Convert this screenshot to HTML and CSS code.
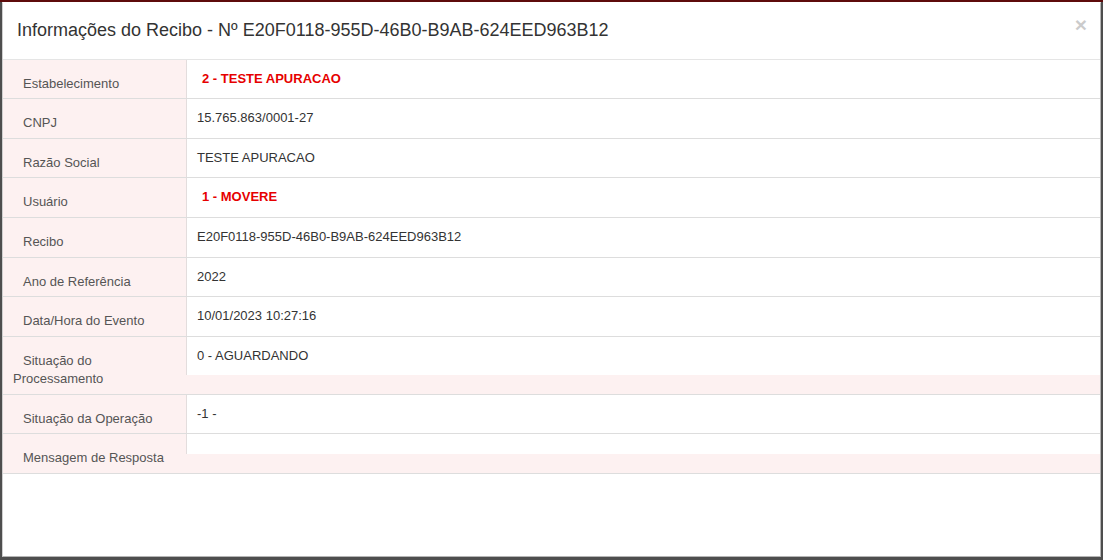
FILE: index.html
```html
<!DOCTYPE html>
<html lang="pt-BR">
<head>
<meta charset="utf-8">
<title>Informações do Recibo</title>
<link rel="stylesheet" href="styles.css">
</head>
<body>
<div class="modal">
  <div class="modal-header">
    <button class="close" type="button" aria-label="Fechar">×</button>
    <h4 class="modal-title">Informações do Recibo - Nº E20F0118-955D-46B0-B9AB-624EED963B12</h4>
  </div>
  <div class="info-table">
    <div class="info-row">
      <div class="info-label">Estabelecimento</div>
      <div class="info-value"><span class="hl">2 - TESTE APURACAO</span></div>
    </div>
    <div class="info-row">
      <div class="info-label">CNPJ</div>
      <div class="info-value">15.765.863/0001-27</div>
    </div>
    <div class="info-row">
      <div class="info-label">Razão Social</div>
      <div class="info-value">TESTE APURACAO</div>
    </div>
    <div class="info-row">
      <div class="info-label">Usuário</div>
      <div class="info-value"><span class="hl">1 - MOVERE</span></div>
    </div>
    <div class="info-row">
      <div class="info-label">Recibo</div>
      <div class="info-value">E20F0118-955D-46B0-B9AB-624EED963B12</div>
    </div>
    <div class="info-row">
      <div class="info-label">Ano de Referência</div>
      <div class="info-value">2022</div>
    </div>
    <div class="info-row">
      <div class="info-label">Data/Hora do Evento</div>
      <div class="info-value">10/01/2023 10:27:16</div>
    </div>
    <div class="info-row">
      <div class="info-label">Situação do Processamento</div>
      <div class="info-value">0 - AGUARDANDO</div>
    </div>
    <div class="info-row">
      <div class="info-label">Situação da Operação</div>
      <div class="info-value">-1 -</div>
    </div>
    <div class="info-row">
      <div class="info-label">Mensagem de Resposta</div>
      <div class="info-value"></div>
    </div>
  </div>
</div>
</body>
</html>
```

FILE: styles.css
```css
html {
  background: linear-gradient(to bottom, #5e0b0b 0, #5e0b0b 2px, #4e4e4e 2px);
  height: 100%;
}
body {
  margin: 0;
  padding: 2px 0 0 2px;
  font-family: "Liberation Sans", Arial, Helvetica, sans-serif;
  color: #333;
  font-size: 13px;
  line-height: 1.42857;
}
.modal {
  box-sizing: border-box;
  width: 1099px;
  height: 555px;
  background: #fff;
  border: 1px solid #b5b5b5;
  border-top-color: #fff;
  border-left-color: #cfcfcf;
}
.modal-header {
  padding: 15px 13px 15px 14px;
  border-bottom: 1px solid #e5e5e5;
}
.modal-title {
  margin: 0;
  font-size: 18px;
  font-weight: normal;
  line-height: 1.42857;
  color: #333;
}
.close {
  float: right;
  margin-top: -4px;
  padding: 0;
  border: 0;
  background: transparent;
  font-family: "Liberation Sans", Arial, sans-serif;
  font-size: 21px;
  font-weight: bold;
  line-height: 1;
  color: #000;
  opacity: 0.2;
  cursor: pointer;
}
.info-table {
  border-bottom: 1px solid #ddd;
}
.info-row {
  display: flex;
  align-items: flex-start;
  background: #fdf1f1;
  border-top: 1px solid #ddd;
}
.info-row:first-child {
  border-top: 0;
}
.info-label {
  box-sizing: border-box;
  flex: 0 0 183px;
  padding: 15px 10px 5px 10px;
  text-indent: 10px;
  color: #555;
}
.info-value {
  flex: 1;
  min-height: 20px;
  box-sizing: border-box;
  padding: 10px;
  background: #fff;
  border-left: 1px solid #e3dddd;
}
.info-value:empty {
  height: 20px;
  padding: 0;
}
.hl {
  padding-left: 5px;
  font-weight: bold;
  color: #e60000;
}
```
